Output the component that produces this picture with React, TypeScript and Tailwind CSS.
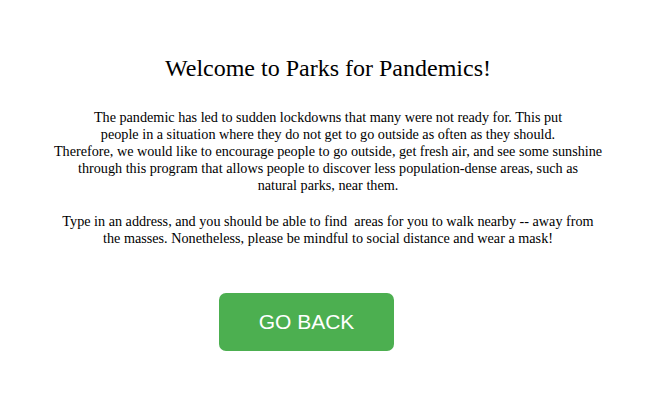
export default function App() {
  return (
    <div className="min-h-screen bg-white text-black font-['Liberation_Serif',serif]">
      <div className="flex flex-col items-center pt-[54px] text-center">
        {/* Title */}
        <h1 className="text-[24px] leading-[28px]">Welcome to Parks for Pandemics!</h1>

        {/* Intro */}
        <p className="mt-[27px] text-[14.2px] leading-[17px]">
          The pandemic has led to sudden lockdowns that many were not ready for. This put
          <br />
          people in a situation where they do not get to go outside as often as they should.
          <br />
          Therefore, we would like to encourage people to go outside, get fresh air, and see some sunshine
          <br />
          through this program that allows people to discover less population-dense areas, such as
          <br />
          natural parks, near them.
        </p>
        <p className="mt-[19px] text-[14.2px] leading-[17px]">
          Type in an address, and you should be able to find{"\u00a0"} areas for you to walk nearby -- away from
          <br />
          the masses. Nonetheless, please be mindful to social distance and wear a mask!
        </p>
      </div>

      {/* Action */}
      <div className="flex pl-[219px] mt-[46px]">
        <button className="w-[175px] h-[58px] rounded-[7px] bg-[#4caf50] text-white text-[21px] font-['Liberation_Sans',sans-serif]">
          GO BACK
        </button>
      </div>
    </div>
  )
}
